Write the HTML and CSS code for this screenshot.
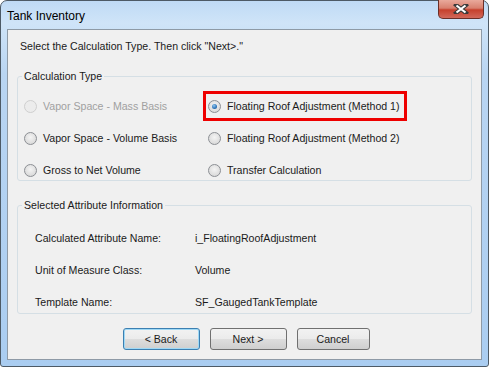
FILE: index.html
```html
<!DOCTYPE html>
<html lang="en">
<head>
  <meta charset="UTF-8">
  <title>Tank Inventory</title>
  <link rel="stylesheet" href="styles.css">
</head>
<body>

  <div class="window">
    <div class="titlebar">
      <span class="title">Tank Inventory</span>
      <div class="close">
        <svg width="16" height="10" viewBox="0 0 16 10">
          <path d="M3 1 L13 9 M13 1 L3 9" stroke="#3a3a3a" stroke-width="4.2" stroke-linecap="square"/>
          <path d="M3.5 1.5 L12.5 8.5 M12.5 1.5 L3.5 8.5" stroke="#fff" stroke-width="2.2"/>
        </svg>
      </div>
    </div>

    <div class="client">
      <p class="intro">Select the Calculation Type. Then click "Next&gt;."</p>

      <fieldset class="group calc">
        <legend>Calculation Type</legend>
        <div class="radios">
          <label class="opt disabled"><span class="radio"></span>Vapor Space - Mass Basis</label>
          <label class="opt highlight"><span class="radio on"></span>Floating Roof Adjustment (Method 1)</label>
          <label class="opt"><span class="radio"></span>Vapor Space - Volume Basis</label>
          <label class="opt"><span class="radio"></span>Floating Roof Adjustment (Method 2)</label>
          <label class="opt"><span class="radio"></span>Gross to Net Volume</label>
          <label class="opt"><span class="radio"></span>Transfer Calculation</label>
        </div>
      </fieldset>

      <fieldset class="group info">
        <legend>Selected Attribute Information</legend>
        <div class="attrs">
          <span>Calculated Attribute Name:</span><span>i_FloatingRoofAdjustment</span>
          <span>Unit of Measure Class:</span><span>Volume</span>
          <span>Template Name:</span><span>SF_GaugedTankTemplate</span>
        </div>
      </fieldset>

      <div class="buttons">
        <button class="btn default">&lt; Back</button>
        <button class="btn">Next &gt;</button>
        <button class="btn cancel">Cancel</button>
      </div>
    </div>
  </div>

</body>
</html>
```

FILE: styles.css
```css
body {
  margin: 0;
  background: #fff;
  font-family: 'Liberation Sans', Arial, sans-serif;
  font-size: 10.6px;
  color: #1a1a1a;
}
.window {
  width: 489px;
  height: 367px;
  box-sizing: border-box;
  border: 1px solid #4d5a66;
  border-radius: 7px 7px 3px 3px;
  background: linear-gradient(to bottom, #bfdaf5 0%, #cfe4f8 6%, #b9d5f2 20%, #aacdf1 100%);
  padding: 0 6px 6px 6px;
  display: flex;
  flex-direction: column;
}
.titlebar {
  height: 28px;
  display: flex;
  align-items: flex-start;
  justify-content: space-between;
}
.title {
  margin-top: 8px;
  font-size: 12px;
  color: #000;
}
.close {
  width: 44px;
  height: 18px;
  margin-top: -1px;
  margin-right: -2px;
  border: 1px solid #6b2f28;
  border-top: none;
  border-radius: 0 0 5px 5px;
  background: linear-gradient(to bottom, #e9a99b 0%, #d8806f 45%, #c6402c 55%, #d2685a 100%);
  display: flex;
  align-items: center;
  justify-content: center;
}
.client {
  flex: 1;
  border: 1px solid #8e9aa6;
  background: #f0f0f0;
  padding: 0 9px 0 9px;
  display: flex;
  flex-direction: column;
}
.intro {
  margin: 9px 0 0 3px;
  height: 14px;
  line-height: 14px;
}
.group {
  margin: 0;
  border: 1px solid #d5dfe5;
  border-radius: 3px;
  padding: 0;
  min-width: 0;
}
.group legend {
  padding: 0 2px;
  margin-left: 4px;
  line-height: 14px;
}
.calc {
  margin-top: 16px;
  height: 110px;
}
.radios {
  display: grid;
  grid-template-columns: 184px 1fr;
  grid-auto-rows: 32px;
  padding: 7px 0 0 6px;
}
.opt {
  display: flex;
  align-items: center;
  height: 32px;
  white-space: nowrap;
}
.opt.disabled {
  color: #a0a0a0;
}
.highlight {
  position: relative;
}
.highlight::before {
  content: "";
  position: absolute;
  left: -5px;
  top: 1px;
  width: 198px;
  height: 24px;
  border: 3px solid #ee0000;
}
.radio {
  width: 11px;
  height: 11px;
  border-radius: 50%;
  border: 1px solid #8c8f94;
  background: radial-gradient(circle at 50% 40%, #f4f4f4 0%, #dcdcdc 70%, #cfcfcf 100%);
  margin-right: 6px;
  box-sizing: content-box;
  display: inline-block;
  position: relative;
}
.disabled .radio {
  border-color: #cfcfcf;
  background: #ececec;
}
.radio.on::after {
  content: "";
  position: absolute;
  left: 3px;
  top: 3px;
  width: 5px;
  height: 5px;
  border-radius: 50%;
  background: radial-gradient(circle at 40% 35%, #8fc5ef 0%, #2d74b8 60%, #1b4f86 100%);
}
.info {
  margin-top: 17px;
  height: 114px;
}
.attrs {
  display: grid;
  grid-template-columns: 160px 1fr;
  grid-auto-rows: 32px;
  align-items: center;
  padding: 10px 0 0 17px;
}
.buttons {
  display: flex;
  justify-content: center;
  gap: 10px;
  margin-top: 14px;
  padding-left: 3px;
}
.btn {
  width: 77px;
  height: 22px;
  font-family: inherit;
  font-size: 10.6px;
  color: #1a1a1a;
  border: 1px solid #707070;
  border-radius: 3px;
  background: linear-gradient(to bottom, #f2f2f2 0%, #ebebeb 50%, #dddddd 51%, #cfcfcf 100%);
  padding: 0;
}
.btn.cancel {
  width: 73px;
}
.btn.default {
  border-color: #3c7fb1;
  box-shadow: inset 0 0 0 1px #9fd9f6;
}
```
